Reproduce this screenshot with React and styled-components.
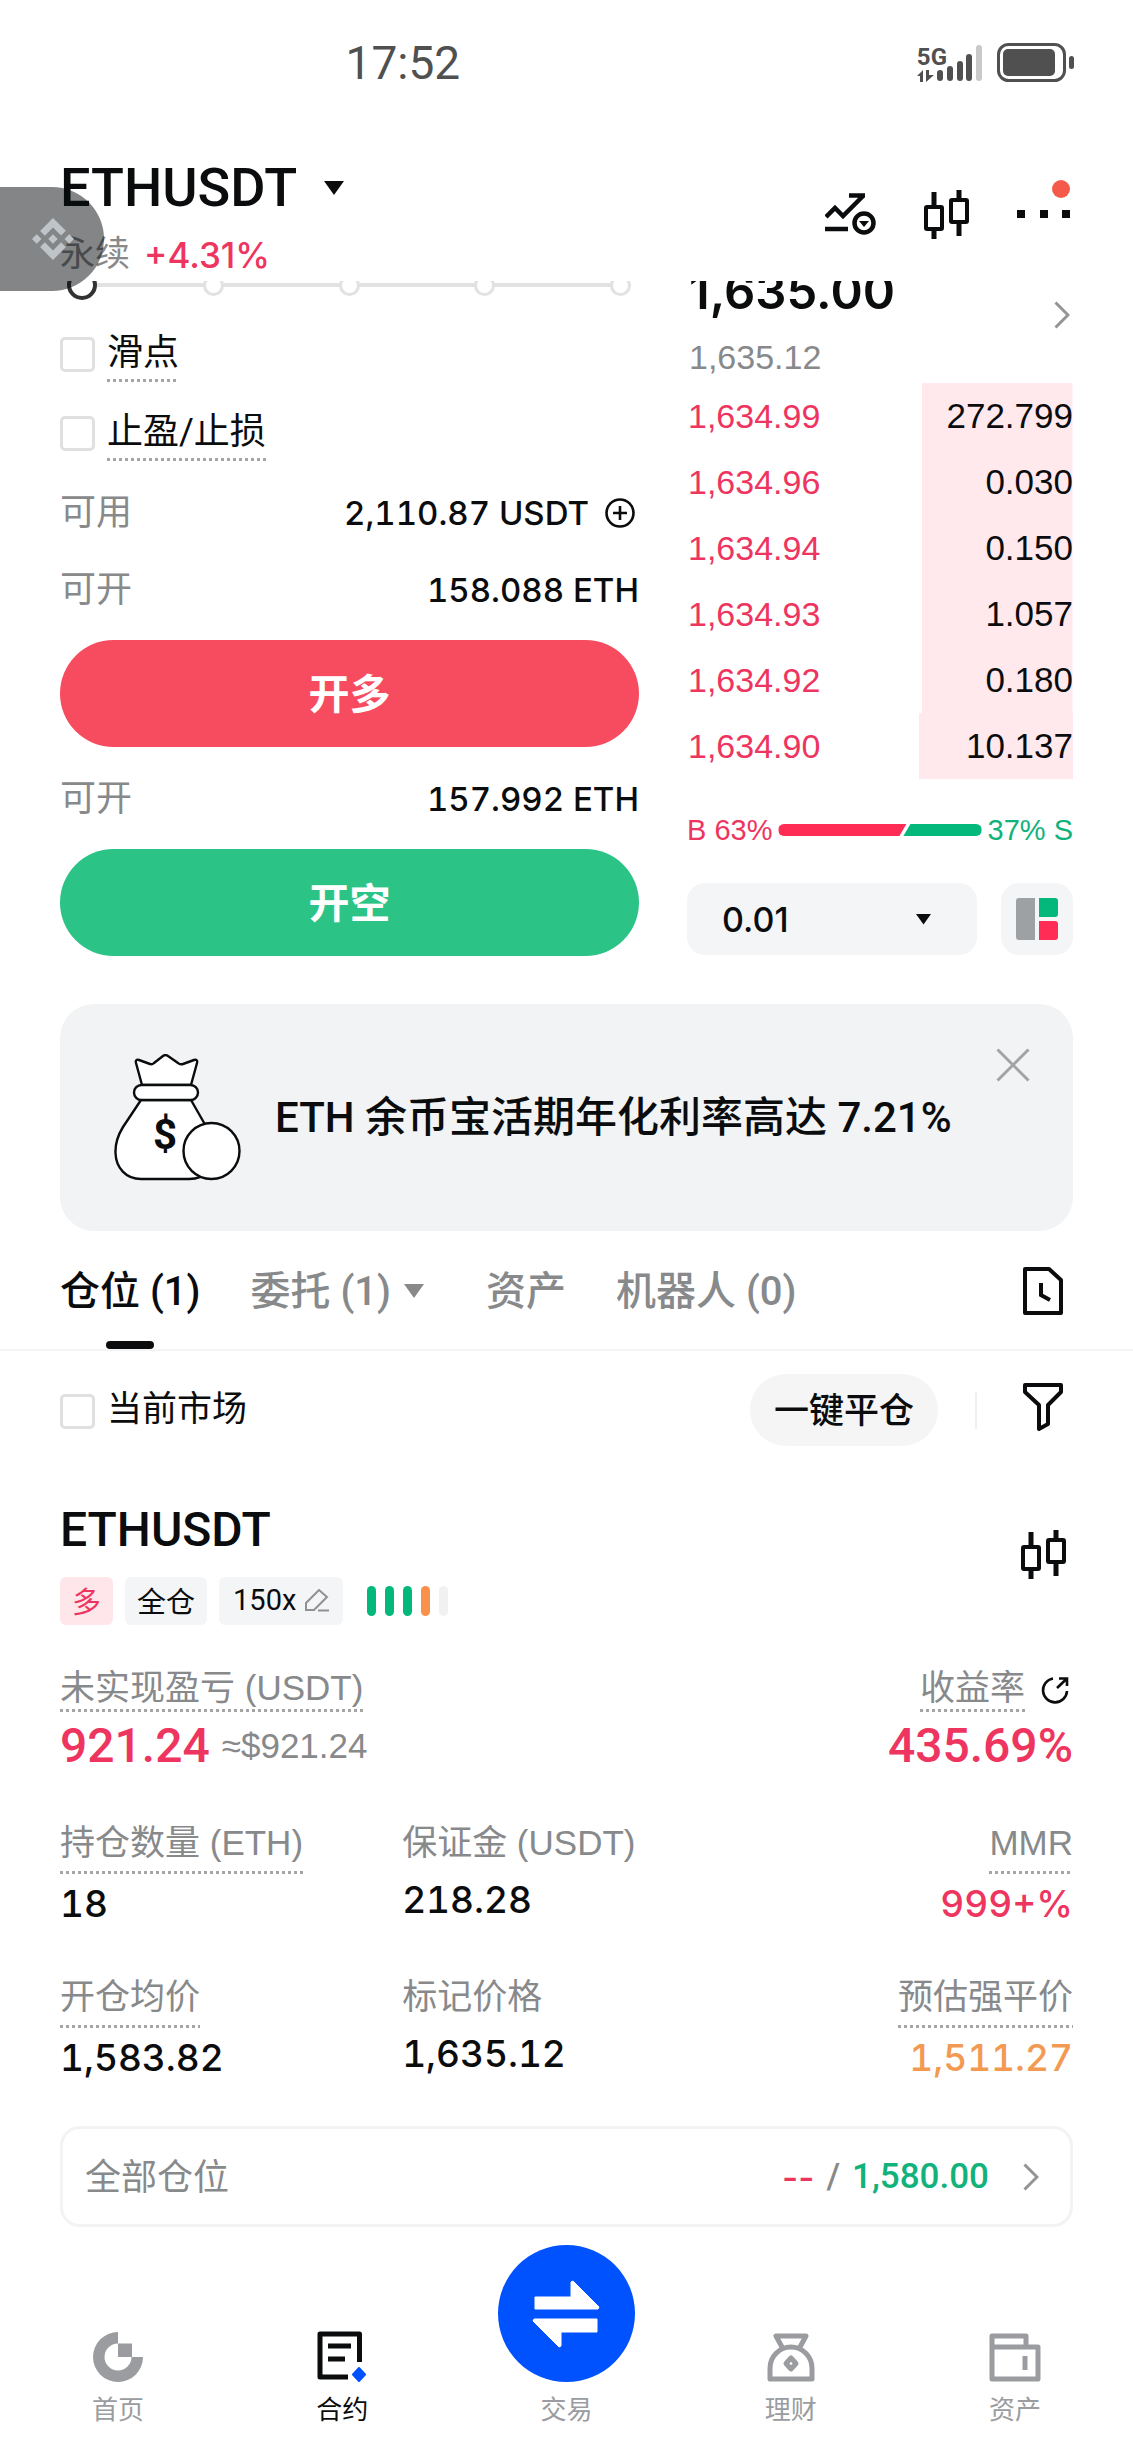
import React, { useState } from 'react';
import styled, { createGlobalStyle } from 'styled-components';
import { SiBinance } from 'react-icons/si';

const GlobalStyle = createGlobalStyle`
  * {
    box-sizing: border-box;
  }

  body {
    margin: 0;
    background-color: #fff;
    color: #0b0c0d;
    font-family: Roboto, 'Noto Sans CJK SC', sans-serif;
    font-size: 36px;
  }

  button,
  select {
    border: 0;
    padding: 0;
    color: inherit;
    font: inherit;
    background: none;
    cursor: pointer;
  }

  svg {
    display: block;
    flex: none;
  }
`;

const red = '#ee3560';
const green = '#12b27c';
const gray = '#87898b';

const dots = `repeating-linear-gradient(
  to right,
  #a3a5a7 0 3px,
  transparent 3px 6px
) bottom left / 100% 3px no-repeat`;

const StatusBar = styled.div`
  display: flex;
  align-items: center;
  justify-content: space-between;
  height: 126px;
  padding: 0 59px 0 30.5%;
  color: #505050;
`;

const Time = styled.time`
  font-size: 46px;
  line-height: 56px;
`;

const StatusIcons = styled.div`
  display: flex;
  align-items: center;
  gap: 14px;
`;

const Network = styled.div`
  display: flex;
  align-items: flex-end;

  & > svg {
    margin-left: -10px;
  }
`;

const NetworkType = styled.span`
  display: block;
  font-size: 24px;
  font-weight: 700;
  line-height: 24px;
`;

const Header = styled.header`
  display: flex;
  justify-content: space-between;
  align-items: flex-start;
  height: 155px;
  padding: 34px 60px 0;
`;

const PairButton = styled.button`
  display: flex;
  align-items: center;
  gap: 27px;
  font-size: 54px;
  font-weight: 500;
  line-height: 56px;
`;

const PairInfo = styled.div`
  display: flex;
  align-items: center;
  gap: 14px;
  margin-top: 19px;
  font-size: 35px;
  line-height: 40px;
  color: ${gray};

  & b {
    font-family: Inter, sans-serif;
    font-weight: 500;
    color: ${red};
  }
`;

const Actions = styled.div`
  display: flex;
  align-items: center;
  gap: 48px;
  margin-top: 16px;
`;

const IconButton = styled.button`
  display: flex;
  flex: none;
`;

const FloatingTab = styled.button`
  position: absolute;
  top: 187px;
  left: 0;
  display: flex;
  align-items: center;
  width: 104px;
  height: 104px;
  padding-left: 32px;
  border-radius: 0 52px 52px 0;
  background-color: rgba(8, 12, 14, 0.5);
  color: #bfc4c9;
  z-index: 2;
`;

const Trade = styled.section`
  display: grid;
  grid-template-columns: minmax(0, 3fr) minmax(0, 2fr);
  gap: 48px;
  padding: 0 60px;
  overflow: hidden;
`;

const OrderForm = styled.form`
  display: flex;
  flex-direction: column;
`;

const Slider = styled.div`
  position: relative;
  display: flex;
  align-items: center;
  height: 30px;
  margin: -11px 8px 31px 7px;

  & input {
    position: absolute;
    inset: 0;
    width: 100%;
    height: 30px;
    margin: 0;
    appearance: none;
    background: none;
  }

  & input::-webkit-slider-thumb {
    appearance: none;
    width: 30px;
    height: 30px;
    border: 4px solid #303234;
    border-radius: 50%;
    background-color: #fff;
  }
`;

const Track = styled.div`
  display: flex;
  flex: 1;
  align-items: center;
  justify-content: space-between;
  height: 4px;
  background-color: #e2e2e2;

  & i {
    width: 21px;
    height: 21px;
    border: 3px solid #e2e2e2;
    border-radius: 50%;
    background-color: #fff;
  }
`;

const CheckLabel = styled.label`
  display: flex;
  gap: 12px;
  line-height: 44px;

  & + & {
    margin-top: 28px;
  }

  & input {
    flex: none;
    width: 35px;
    height: 35px;
    margin: 6px 0 0;
    appearance: none;
    border: 3px solid #e0e0e0;
    border-radius: 5px;
    background-color: #fff;
  }

  & input:checked {
    background-color: #0b0c0d;
  }

  & span {
    padding-bottom: ${(props) => (props.$dotted ? '7px' : '0')};
    background: ${(props) => (props.$dotted ? dots : 'none')};
  }
`;

const Balance = styled.div`
  display: flex;
  align-items: center;
  justify-content: space-between;
  margin: 32px 0 30px;
  font-size: 36px;
  line-height: 40px;

  & + & {
    margin-top: 7px;
  }

  & > span {
    color: ${gray};
  }

  & > div {
    display: flex;
    align-items: center;
    gap: 16px;
    font-family: Inter, sans-serif;
    font-size: 33px;
    font-weight: 500;
    font-variant-numeric: tabular-nums;
  }

  & button {
    margin-right: 4px;
  }
`;

const SubmitButton = styled.button`
  height: 107px;
  padding-bottom: 6px;
  border-radius: 54px;
  background-color: ${(props) => (props.$long ? '#f74c60' : '#2cc386')};
  color: #fff;
  font-size: 41px;
  font-weight: 700;
`;

const Book = styled.div`
  display: flex;
  flex-direction: column;
`;

const Quote = styled.div`
  display: flex;
  align-items: center;
  justify-content: space-between;
  margin-top: -19px;
  padding: 0 3px 0 2px;

  & > svg {
    margin-bottom: 10px;
  }
`;

const LastPrice = styled.div`
  font-family: Inter, sans-serif;
  font-size: 49px;
  font-weight: 600;
  line-height: 60px;
`;

const MarkPrice = styled.div`
  margin-top: 15px;
  font-family: 'Liberation Sans', sans-serif;
  font-size: 34px;
  line-height: 40px;
  color: ${gray};
`;

const BookTable = styled.table`
  width: 100%;
  margin-top: 6px;
  border-collapse: collapse;
  font-family: 'Liberation Sans', sans-serif;
  font-size: 35px;

  & tr {
    background: linear-gradient(#ffe9ed, #ffe9ed) right no-repeat;
  }

  & td {
    height: 66px;
    padding: 0 0 0 1px;
    text-align: right;
  }

  & td:first-child {
    font-size: 34px;
    color: ${red};
    text-align: left;
  }
`;

const Ratio = styled.div`
  display: flex;
  align-items: center;
  gap: 6px;
  margin: 33px 0 35px;
  font-family: 'Liberation Sans', sans-serif;
  font-size: 29px;
  line-height: 36px;
  color: ${green};

  & span:first-child {
    color: ${red};
  }
`;

const RatioBar = styled.div`
  display: flex;
  flex: 1;
  height: 12px;
  border-radius: 6px;
  overflow: hidden;

  & i:first-child {
    background-color: #ff2d55;
    clip-path: polygon(0 0, 100% 0, calc(100% - 7px) 100%, 0 100%);
  }

  & i:last-child {
    flex: 1;
    margin-left: -3px;
    background-color: #04b87c;
    clip-path: polygon(7px 0, 100% 0, 100% 100%, 0 100%);
  }
`;

const BookControls = styled.div`
  display: flex;
  gap: 24px;
`;

const StepSelect = styled.div`
  position: relative;
  flex: 1;

  & select {
    width: 100%;
    height: 72px;
    padding-left: 35px;
    appearance: none;
    border-radius: 18px;
    background-color: #f4f5f6;
    font-family: Inter, sans-serif;
    font-size: 34px;
    font-weight: 500;
  }

  & svg {
    position: absolute;
    top: 31px;
    right: 46px;
    pointer-events: none;
  }
`;

const LayoutButton = styled.button`
  display: flex;
  align-items: center;
  justify-content: center;
  width: 72px;
  height: 72px;
  border-radius: 18px;
  background-color: #f4f5f6;
`;

const Banner = styled.aside`
  display: flex;
  align-items: center;
  gap: 34px;
  min-height: 227px;
  margin: 48px 60px 0;
  padding: 0 43px 0 54px;
  border-radius: 34px;
  background-color: #f1f3f4;

  & p {
    flex: 1;
    margin: 0;
    font-size: 42px;
    font-weight: 500;
    line-height: 60px;
    white-space: nowrap;
  }

  & button {
    align-self: flex-start;
    margin-top: 44px;
  }
`;

const TabBar = styled.nav`
  display: flex;
  align-items: flex-end;
  justify-content: space-between;
  height: 120px;
  padding: 0 70px 0 60px;
  border-bottom: 2px solid #f4f4f4;
`;

const Tabs = styled.div`
  display: flex;
  gap: 50px;
`;

const Tab = styled.button`
  position: relative;
  display: flex;
  align-items: center;
  gap: 13px;
  height: 88px;
  padding-bottom: 34px;
  font-size: 40px;
  font-weight: 500;
  color: ${(props) => (props.$active ? '#0b0c0d' : gray)};

  &::after {
    content: '';
    position: absolute;
    bottom: 0;
    left: 50%;
    width: 48px;
    height: 8px;
    margin-left: -24px;
    border-radius: 4px;
    background-color: ${(props) => (props.$active ? '#0b0c0d' : 'transparent')};
  }

  & svg {
    margin: 6px 12px 0 0;
  }
`;

const HistoryButton = styled(IconButton)`
  margin-bottom: 34px;
`;

const Tools = styled.div`
  display: flex;
  align-items: center;
  padding: 23px 70px 0 60px;

  & label {
    flex: 1;
    font-size: 35px;
  }
`;

const CloseAll = styled.button`
  height: 72px;
  padding: 0 24px 6px;
  border-radius: 36px;
  background-color: #f5f5f5;
  font-size: 35px;
  font-weight: 500;
`;

const Divider = styled.i`
  width: 2px;
  height: 37px;
  margin: 0 46px 0 37px;
  background-color: #f0f0f0;
`;

const Position = styled.article`
  padding: 56px 60px 0;
`;

const PositionHead = styled.div`
  display: flex;
  align-items: center;
  justify-content: space-between;
  padding-right: 7px;

  & h2 {
    margin: 0;
    font-size: 48px;
    font-weight: 500;
    line-height: 56px;
  }

  & > button {
    margin-bottom: 20px;
  }
`;

const Tags = styled.div`
  display: flex;
  align-items: center;
  gap: 12px;
  margin-top: 19px;
`;

const Tag = styled.span`
  display: flex;
  align-items: center;
  gap: 9px;
  height: 48px;
  padding: 0 ${(props) => (props.$wide ? '14px' : '12px')} 2px;
  border-radius: 6px;
  background-color: ${(props) => (props.$long ? '#ffe6eb' : '#f3f5f6')};
  color: ${(props) => (props.$long ? red : 'inherit')};
  font-size: 29px;
`;

const Strength = styled.div`
  display: flex;
  gap: 9px;
  margin-left: 12px;
`;

const StrengthBar = styled.i`
  width: 9px;
  height: 30px;
  border-radius: 5px;
  background-color: ${(props) => props.$color};
`;

const Pnl = styled.dl`
  display: flex;
  justify-content: space-between;
  margin: 43px 0 0;
  font-family: 'Liberation Sans', 'Noto Sans CJK SC', sans-serif;
  font-size: 35px;

  & div:last-child {
    display: flex;
    flex-direction: column;
    align-items: flex-end;
  }

  & dt {
    display: flex;
    align-items: center;
    gap: 16px;
    line-height: 40px;
    color: ${gray};
  }

  & dt span {
    padding-bottom: 4px;
    background: ${dots};
  }

  & dt button {
    margin-right: 4px;
  }

  & dd {
    display: flex;
    align-items: center;
    gap: 12px;
    margin: 6px 0 0;
    line-height: 56px;
    color: ${gray};
  }

  & b {
    font-family: Roboto, sans-serif;
    font-size: 48px;
    font-weight: 500;
    color: ${red};
  }
`;

const Metrics = styled.dl`
  display: grid;
  grid-template-columns: 1.02fr 1fr 1fr;
  row-gap: 49px;
  margin: 49px 0 44px;
`;

const Metric = styled.div`
  display: flex;
  flex-direction: column;
  align-items: flex-start;

  &:nth-child(3n) {
    align-items: flex-end;
  }

  & dt {
    padding-bottom: ${(props) => (props.$dotted ? '11px' : '7px')};
    background: ${(props) => (props.$dotted ? dots : 'none')};
    font-family: 'Liberation Sans', 'Noto Sans CJK SC', sans-serif;
    font-size: 35px;
    line-height: 40px;
    color: ${gray};
  }

  & dd {
    margin: 6px 0 0;
    font-family: Inter, sans-serif;
    font-size: 37px;
    font-weight: 500;
    font-variant-numeric: tabular-nums;
    line-height: 48px;
    color: ${(props) => props.$color || 'inherit'};
  }
`;

const AllPositions = styled.button`
  display: flex;
  align-items: center;
  width: 100%;
  height: 101px;
  padding: 0 31px 0 22px;
  border: 3px solid #f3f3f3;
  border-radius: 20px;
  color: ${gray};

  & span {
    flex: 1;
    padding-bottom: 6px;
    font-size: 36px;
    text-align: left;
  }

  & em {
    display: flex;
    gap: 12px;
    margin-right: 34px;
    font-size: 35px;
    font-style: normal;
    font-weight: 500;
  }
`;

const Short = styled.b`
  font-family: Inter, sans-serif;
  font-weight: 500;
  color: ${red};
`;

const Liquidation = styled.b`
  font-weight: 500;
  color: ${green};
`;

const BottomNav = styled.nav`
  display: grid;
  grid-template-columns: repeat(5, 1fr);
  align-items: end;
  padding: 18px 6px 23px;
`;

const NavItem = styled.a`
  display: flex;
  flex-direction: column;
  align-items: center;
  gap: 10px;
  font-size: 26px;
  line-height: 36px;
  color: ${(props) => (props.$active ? '#0b0c0d' : '#9a9c9f')};
  text-decoration: none;
`;

const Caret = ({ size = 20 }) => (
  <svg width={size} height={size * 0.7} viewBox="0 0 20 14">
    <path d="M0 0H20L10 14Z" fill="currentColor" />
  </svg>
);

const Chevron = () => (
  <svg width="16" height="28" viewBox="0 0 16 28" fill="none" stroke="#929496" strokeWidth="3">
    <path d="M1.5 1.5L14 14L1.5 26.5" />
  </svg>
);

const Candles = () => (
  <svg width="45" height="50" viewBox="0 0 45 50" fill="none" stroke="currentColor" strokeWidth="4">
    <rect x="2" y="18" width="16" height="22" rx="1" />
    <rect x="27" y="11" width="16" height="22" rx="1" />
    <path d="M10 3V18M10 40V50M35 1V11M35 33V47" strokeWidth="5" />
  </svg>
);

const DataArrows = () => (
  <svg width="17" height="13" viewBox="0 0 17 13" fill="#505050">
    <path d="M0 7L6 1V13H3V7ZM9 1H12V6L17 6L9 13Z" />
  </svg>
);

const SignalBars = () => (
  <svg width="46" height="38" viewBox="0 0 46 38" fill="#505050">
    <rect x="0" y="26" width="6" height="11" rx="3" />
    <rect x="10" y="22" width="6" height="15" rx="3" />
    <rect x="20" y="17" width="6" height="20" rx="3" />
    <rect x="29" y="10" width="6" height="27" rx="3" />
    <rect x="39" y="1" width="6" height="36" rx="3" fill="#c9c9c9" />
  </svg>
);

const BatteryIcon = () => (
  <svg width="77" height="40" viewBox="0 0 77 40">
    <rect x="1.5" y="1.5" width="66" height="36" rx="10" fill="none" stroke="#505050" strokeWidth="3" />
    <rect x="6" y="6" width="52" height="27" rx="5" fill="#505050" />
    <rect x="72" y="13" width="5" height="13" rx="2.5" fill="#505050" />
  </svg>
);

const IndicatorIcon = () => (
  <svg width="51" height="42" viewBox="0 0 51 42" fill="none" stroke="currentColor" strokeWidth="4.5">
    <path d="M1 24L10 15L18 23L38 3M24 2.5H40M0 36H23" />
    <circle cx="39" cy="30" r="9.5" />
    <path d="M34 28H44L39 34Z" fill="currentColor" stroke="none" />
  </svg>
);

const MoreIcon = () => (
  <svg width="56" height="76" viewBox="0 0 56 76">
    <path d="M0 34H8V42H0ZM23 34H31V42H23ZM45 34H53V42H45Z" fill="currentColor" />
    <circle cx="44" cy="13" r="9" fill="#f5594a" />
  </svg>
);

const PlusCircle = () => (
  <svg width="30" height="30" viewBox="0 0 30 30" fill="none" stroke="currentColor" strokeWidth="2.6">
    <circle cx="15" cy="15" r="13.5" />
    <path d="M15 8V22M8 15H22" />
  </svg>
);

const LayoutIcon = () => (
  <svg width="42" height="42" viewBox="0 0 42 42">
    <path d="M3 0H19V42H3Q0 42 0 39V3Q0 0 3 0Z" fill="#9da1a4" />
    <path d="M23 0H39Q42 0 42 3V16Q42 19 39 19H23Z" fill="#04b87c" />
    <path d="M23 23H39Q42 23 42 26V39Q42 42 39 42H23Z" fill="#ff2d55" />
  </svg>
);

const MoneyBag = () => (
  <svg width="127" height="127" viewBox="0 0 127 127" fill="#fff" stroke="#0b0c0d" strokeWidth="2.4" strokeLinejoin="round">
    <path d="M28 31L22 9Q21 5 25 6L36 10Q38 11 40 9L49 2Q51.5 0 54 2L64 9Q66 11 69 10L80 6Q84 5 83 9L77 31Z" />
    <path d="M27 46L9 73Q1 86 1.5 99C2 114 12 125 27 125H75C92 125 102 113 101 98Q100 88 93 74L77 46Z" />
    <rect x="20" y="31" width="64" height="15" rx="7.5" />
    <circle cx="97.5" cy="97" r="28" />
    <text x="51" y="95" textAnchor="middle" fontFamily="Roboto" fontSize="42" fontWeight="700" fill="#0b0c0d" stroke="none">
      $
    </text>
  </svg>
);

const CloseIcon = () => (
  <svg width="34" height="34" viewBox="0 0 34 34" stroke="#a1a3a5" strokeWidth="3">
    <path d="M1.5 1.5L32.5 32.5M32.5 1.5L1.5 32.5" />
  </svg>
);

const HistoryIcon = () => (
  <svg width="40" height="48" viewBox="0 0 40 48" fill="none" stroke="currentColor" strokeWidth="4" strokeLinejoin="round">
    <path d="M2 2H26L38 13V46H2Z" />
    <path d="M18 16V28L27 33" strokeLinejoin="miter" />
  </svg>
);

const FilterIcon = () => (
  <svg width="40" height="54" viewBox="0 0 40 54" fill="none" stroke="currentColor" strokeWidth="4" strokeLinejoin="round">
    <path d="M2 2H38V9L25 22V41L16 46V22L2 9Z" />
  </svg>
);

const PencilIcon = () => (
  <svg width="24" height="23" viewBox="0 0 24 23" fill="none" stroke="#8f9193" strokeWidth="2">
    <path d="M1 21V14L14 1L22 8L9 21ZM13 21.5H24" />
  </svg>
);

const ShareIcon = () => (
  <svg width="28" height="28" viewBox="0 0 28 28" fill="none" stroke="#0b0c0d" strokeWidth="2.6">
    <path d="M12 2.5A12 12 0 1 0 26 15M16 12L26 2.5M18 2.5H26V10" />
  </svg>
);

const HomeIcon = () => (
  <svg width="50" height="50" viewBox="0 0 50 50" fill="currentColor">
    <path d="M25 0A25 25 0 1 0 50 25H38.5A13.5 13.5 0 1 1 25 11.5Z" />
    <rect x="25" y="11.5" width="14" height="13.5" />
  </svg>
);

const ContractIcon = () => (
  <svg width="50" height="51" viewBox="0 0 50 51" fill="none" stroke="currentColor" strokeWidth="5" strokeLinejoin="round">
    <path d="M31 46H3V3H42.5V31" />
    <path d="M11 15H34M11 28H28" />
    <path d="M42 37L48 43.5L42 50L36 43.5Z" fill="#0052ff" stroke="#0052ff" strokeWidth="2" />
  </svg>
);

const TransferIcon = () => (
  <svg width="137" height="137" viewBox="0 0 137 137">
    <circle cx="68.5" cy="68.5" r="68.5" fill="#0052ff" />
    <path
      d="M37 52H73V37L75 36L101 62L100 64H37ZM99 74V87H63V101L61 102L35 76L36 74Z"
      fill="#fff"
      stroke="#fff"
      strokeLinejoin="round"
    />
  </svg>
);

const EarnIcon = () => (
  <svg width="48" height="49" viewBox="0 0 48 49" fill="none" stroke="currentColor" strokeWidth="5" strokeLinejoin="round">
    <path d="M15 14L9 3H39L33 14" />
    <path d="M3 46V35A21 21 0 0 1 45 35V46Z" />
    <path d="M24 25L29 30.5L24 36L19 30.5Z" />
  </svg>
);

const WalletIcon = () => (
  <svg width="52" height="49" viewBox="0 0 52 49" fill="none" stroke="currentColor" strokeWidth="5" strokeLinejoin="round">
    <path d="M3 14V3H37V14M3 14H49V46H3Z" />
    <path d="M36 23V37" />
  </svg>
);

const asks = [
  { price: '1,634.99', amount: '272.799', depth: 39 },
  { price: '1,634.96', amount: '0.030', depth: 39 },
  { price: '1,634.94', amount: '0.150', depth: 39 },
  { price: '1,634.93', amount: '1.057', depth: 39 },
  { price: '1,634.92', amount: '0.180', depth: 39 },
  { price: '1,634.90', amount: '10.137', depth: 40 }
];

const metrics = [
  { label: '持仓数量 (ETH)', value: '18', dotted: true },
  { label: '保证金 (USDT)', value: '218.28' },
  { label: 'MMR', value: '999+%', dotted: true, color: red },
  { label: '开仓均价', value: '1,583.82', dotted: true },
  { label: '标记价格', value: '1,635.12' },
  { label: '预估强平价', value: '1,511.27', dotted: true, color: '#f29a52' }
];

const strength = ['#04b87c', '#04b87c', '#04b87c', '#f9914a', '#f1f1f1'];

const tabs = [
  { id: 'positions', label: '仓位 (1)' },
  { id: 'orders', label: '委托 (1)', menu: true },
  { id: 'assets', label: '资产' },
  { id: 'bots', label: '机器人 (0)' }
];

const navItems = [
  { label: '首页', Icon: HomeIcon },
  { label: '合约', Icon: ContractIcon, active: true },
  { label: '交易', Icon: TransferIcon },
  { label: '理财', Icon: EarnIcon },
  { label: '资产', Icon: WalletIcon }
];

const App = () => {
  const [size, setSize] = useState(0);
  const [tab, setTab] = useState('positions');
  const buyRatio = 63;

  return (
    <>
      <GlobalStyle />
      <StatusBar>
        <Time>17:52</Time>
        <StatusIcons>
          <Network>
            <div>
              <NetworkType>5G</NetworkType>
              <DataArrows />
            </div>
            <SignalBars />
          </Network>
          <BatteryIcon />
        </StatusIcons>
      </StatusBar>

      <Header>
        <div>
          <PairButton>
            ETHUSDT
            <Caret />
          </PairButton>
          <PairInfo>
            永续 <b>+4.31%</b>
          </PairInfo>
        </div>
        <Actions>
          <IconButton aria-label="指标">
            <IndicatorIcon />
          </IconButton>
          <IconButton aria-label="K线">
            <Candles />
          </IconButton>
          <IconButton aria-label="更多">
            <MoreIcon />
          </IconButton>
        </Actions>
      </Header>
      <FloatingTab aria-label="悬浮窗">
        <SiBinance size={42} />
      </FloatingTab>

      <main>
        <Trade>
          <OrderForm onSubmit={(e) => e.preventDefault()}>
            <Slider>
              <Track>
                <i />
                <i />
                <i />
                <i />
                <i />
              </Track>
              <input
                type="range"
                aria-label="数量"
                value={size}
                onChange={(e) => setSize(e.target.value)}
              />
            </Slider>
            <CheckLabel $dotted>
              <input type="checkbox" />
              <span>滑点</span>
            </CheckLabel>
            <CheckLabel $dotted>
              <input type="checkbox" />
              <span>止盈/止损</span>
            </CheckLabel>
            <Balance>
              <span>可用</span>
              <div>
                2,110.87 USDT
                <IconButton type="button" aria-label="充值">
                  <PlusCircle />
                </IconButton>
              </div>
            </Balance>
            <Balance>
              <span>可开</span>
              <div>158.088 ETH</div>
            </Balance>
            <SubmitButton $long>开多</SubmitButton>
            <Balance>
              <span>可开</span>
              <div>157.992 ETH</div>
            </Balance>
            <SubmitButton>开空</SubmitButton>
          </OrderForm>

          <Book>
            <Quote>
              <div>
                <LastPrice>1,635.00</LastPrice>
                <MarkPrice>1,635.12</MarkPrice>
              </div>
              <Chevron />
            </Quote>
            <BookTable>
              <tbody>
                {asks.map((ask) => (
                  <tr key={ask.price} style={{ backgroundSize: `${ask.depth}% 100%` }}>
                    <td>{ask.price}</td>
                    <td>{ask.amount}</td>
                  </tr>
                ))}
              </tbody>
            </BookTable>
            <Ratio>
              <span>B {buyRatio}%</span>
              <RatioBar>
                <i style={{ width: `${buyRatio}%` }} />
                <i />
              </RatioBar>
              <span>{100 - buyRatio}% S</span>
            </Ratio>
            <BookControls>
              <StepSelect>
                <select aria-label="深度">
                  <option>0.01</option>
                  <option>0.1</option>
                  <option>1</option>
                </select>
                <Caret size={15} />
              </StepSelect>
              <LayoutButton aria-label="盘口布局">
                <LayoutIcon />
              </LayoutButton>
            </BookControls>
          </Book>
        </Trade>

        <Banner>
          <MoneyBag />
          <p>ETH 余币宝活期年化利率高达 7.21%</p>
          <IconButton aria-label="关闭">
            <CloseIcon />
          </IconButton>
        </Banner>

        <TabBar>
          <Tabs>
            {tabs.map(({ id, label, menu }) => (
              <Tab key={id} $active={id === tab} onClick={() => setTab(id)}>
                {label}
                {menu && <Caret />}
              </Tab>
            ))}
          </Tabs>
          <HistoryButton aria-label="历史">
            <HistoryIcon />
          </HistoryButton>
        </TabBar>

        <Tools>
          <CheckLabel>
            <input type="checkbox" />
            <span>当前市场</span>
          </CheckLabel>
          <CloseAll>一键平仓</CloseAll>
          <Divider />
          <IconButton aria-label="筛选">
            <FilterIcon />
          </IconButton>
        </Tools>

        <Position>
          <PositionHead>
            <div>
              <h2>ETHUSDT</h2>
              <Tags>
                <Tag $long>多</Tag>
                <Tag>全仓</Tag>
                <Tag $wide>
                  150x
                  <PencilIcon />
                </Tag>
                <Strength>
                  {strength.map((color, i) => (
                    <StrengthBar key={i} $color={color} />
                  ))}
                </Strength>
              </Tags>
            </div>
            <IconButton aria-label="K线">
              <Candles />
            </IconButton>
          </PositionHead>

          <Pnl>
            <div>
              <dt>
                <span>未实现盈亏 (USDT)</span>
              </dt>
              <dd>
                <b>921.24</b>≈$921.24
              </dd>
            </div>
            <div>
              <dt>
                <span>收益率</span>
                <IconButton aria-label="分享">
                  <ShareIcon />
                </IconButton>
              </dt>
              <dd>
                <b>435.69%</b>
              </dd>
            </div>
          </Pnl>

          <Metrics>
            {metrics.map(({ label, value, dotted, color }) => (
              <Metric key={label} $dotted={dotted} $color={color}>
                <dt>{label}</dt>
                <dd>{value}</dd>
              </Metric>
            ))}
          </Metrics>

          <AllPositions>
            <span>全部仓位</span>
            <em>
              <Short>--</Short>/<Liquidation>1,580.00</Liquidation>
            </em>
            <Chevron />
          </AllPositions>
        </Position>
      </main>

      <BottomNav>
        {navItems.map(({ label, Icon, active }, i) => (
          <NavItem key={i} href="#" $active={active}>
            <Icon />
            {label}
          </NavItem>
        ))}
      </BottomNav>
    </>
  );
};

export default App;
